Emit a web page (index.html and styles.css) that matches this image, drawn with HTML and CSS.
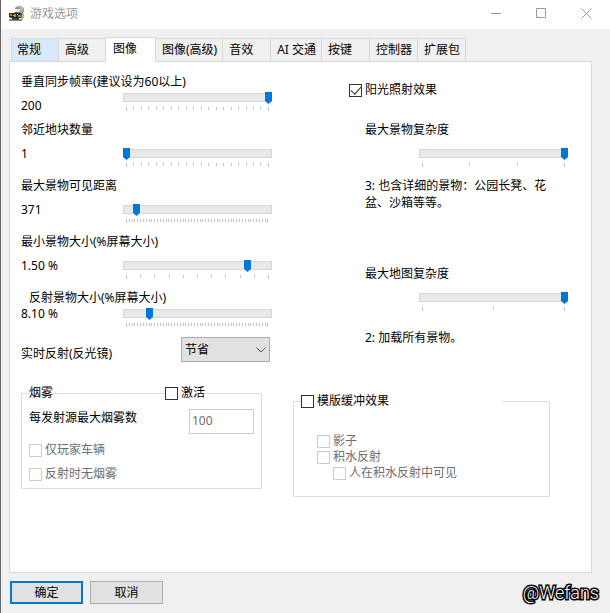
FILE: index.html
```
<!DOCTYPE html>
<html lang="zh-CN">
<head>
    <meta charset="UTF-8">
    <meta name="viewport" content="width=device-width, initial-scale=1.0">
    <title>游戏选项</title>
    <link rel="stylesheet" href="styles.css">
</head>
<body>

    <!-- Title bar -->
    <header class="titlebar">
        <svg class="app-icon" width="16" height="16" viewBox="0 0 16 16" aria-hidden="true">
            <path d="M6 2Q7 0 11 0Q15 1 15 4Q15 7 12 8L8 7L11 5Q12 3 10 3L6 3Z" fill="#8d8d8d"/>
            <path d="M8 1H12L14 3L13 6H11L12 3Z" fill="#b9b9b9"/>
            <path d="M0 7H5L7 6L14 8V12H2L0 11Z" fill="#2b2723"/>
            <path d="M1 8H3V10H1ZM5 8H7V11H5ZM9 9H12V11H9Z" fill="#b58a3a"/>
            <path d="M4 9H5V10H4ZM8 8H9V9H8Z" fill="#e4dcc8"/>
            <path d="M13 7H15V12L13 14H12Z" fill="#b3b3b3"/>
            <path d="M0 13H13V15H0Z" fill="#8a8a8a"/>
            <path d="M3 12H10V14H3Z" fill="#4a4036"/>
        </svg>
        <h1>游戏选项</h1>
        <div class="window-controls">
            <button type="button" aria-label="最小化">
                <svg width="11" height="11" viewBox="0 0 11 11"><path d="M0 5.500H10"/></svg>
            </button>
            <button type="button" aria-label="最大化">
                <svg width="11" height="11" viewBox="0 0 11 11"><path d="M.5 .5H9.500V9.500H.5Z"/></svg>
            </button>
            <button type="button" aria-label="关闭">
                <svg width="11" height="11" viewBox="0 0 11 11"><path d="M.5 .5L10.500 10.500M10.500 .5L.5 10.500"/></svg>
            </button>
        </div>
    </header>

    <main class="dialog">
        <div class="tabs" role="tablist">
            <button class="tab hot" role="tab">常规</button>
            <button class="tab" role="tab">高级</button>
            <button class="tab active" role="tab" aria-selected="true">图像</button>
            <button class="tab" role="tab">图像(高级)</button>
            <button class="tab" role="tab">音效</button>
            <button class="tab" role="tab">AI 交通</button>
            <button class="tab" role="tab">按键</button>
            <button class="tab" role="tab">控制器</button>
            <button class="tab" role="tab">扩展包</button>
        </div>

        <div class="panel" role="tabpanel">
            <!-- Left column -->
            <div class="column">
                <div class="setting raised">
                    <label for="fps">垂直同步帧率(建议设为60以上)</label>
                    <output for="fps">200</output>
                    <div class="slider">
                        <input type="range" id="fps" min="0" max="142" value="142">
                        <div class="ticks" data-count="20"></div>
                    </div>
                </div>
                <div class="setting">
                    <label for="tiles">邻近地块数量</label>
                    <output for="tiles">1</output>
                    <div class="slider">
                        <input type="range" id="tiles" min="0" max="142" value="0">
                        <div class="ticks" data-count="20"></div>
                    </div>
                </div>
                <div class="setting">
                    <label for="distance">最大景物可见距离</label>
                    <output for="distance">371</output>
                    <div class="slider">
                        <input type="range" id="distance" min="0" max="142" value="10">
                        <div class="ticks" data-count="51"></div>
                    </div>
                </div>
                <div class="setting">
                    <label for="minsize">最小景物大小(%屏幕大小)</label>
                    <output for="minsize">1.50 %</output>
                    <div class="slider">
                        <input type="range" id="minsize" min="0" max="142" value="121">
                        <div class="ticks" data-count="11"></div>
                    </div>
                </div>
                <div class="setting compact">
                    <label for="reflsize">反射景物大小(%屏幕大小)</label>
                    <output for="reflsize">8.10 %</output>
                    <div class="slider">
                        <input type="range" id="reflsize" min="0" max="142" value="23">
                        <div class="ticks" data-count="51"></div>
                    </div>
                </div>

                <div class="select-row">
                    <label for="reflections">实时反射(反光镜)</label>
                    <div class="select">
                        <select id="reflections">
                            <option>节省</option>
                        </select>
                        <svg width="10" height="6" viewBox="0 0 10 6" aria-hidden="true"><path d="M.5 .5L5 5L9.500 .5"/></svg>
                    </div>
                </div>

                <fieldset class="group smoke">
                    <legend>烟雾</legend>
                    <label class="check on-border"><input type="checkbox">激活</label>
                    <div class="number-row">
                        <label for="smokemax">每发射源最大烟雾数</label>
                        <input type="text" id="smokemax" value="100" disabled>
                    </div>
                    <label class="check disabled"><input type="checkbox" disabled>仅玩家车辆</label>
                    <label class="check disabled"><input type="checkbox" disabled>反射时无烟雾</label>
                </fieldset>
            </div>

            <!-- Right column -->
            <div class="column">
                <label class="check sun"><input type="checkbox" checked>阳光照射效果</label>

                <div class="complexity">
                    <label for="objects">最大景物复杂度</label>
                    <div class="slider">
                        <input type="range" id="objects" min="0" max="3" value="3">
                        <div class="ticks" data-count="4"></div>
                    </div>
                    <p>3: 也含详细的景物：公园长凳、花盆、沙箱等等。</p>
                </div>
                <div class="complexity">
                    <label for="map">最大地图复杂度</label>
                    <div class="slider">
                        <input type="range" id="map" min="0" max="2" value="2">
                        <div class="ticks" data-count="3"></div>
                    </div>
                    <p class="spaced">2: 加载所有景物。</p>
                </div>

                <fieldset class="group stencil">
                    <legend><label class="check"><input type="checkbox">模版缓冲效果</label></legend>
                    <label class="check disabled"><input type="checkbox" disabled>影子</label>
                    <label class="check disabled"><input type="checkbox" disabled>积水反射</label>
                    <label class="check disabled nested"><input type="checkbox" disabled>人在积水反射中可见</label>
                </fieldset>
            </div>
        </div>

        <footer class="actions">
            <button type="button" class="btn default">确定</button>
            <button type="button" class="btn">取消</button>
            <span class="signature">@Wefans</span>
        </footer>
    </main>

    <script>
        // Fill every tick row with its marks
        document.querySelectorAll('.ticks').forEach(function (row) {
            for (let i = 0; i < Number(row.dataset.count); i++) {
                row.appendChild(document.createElement('i'));
            }
        });
    </script>

</body>
</html>
```
FILE: styles.css
```
* {
    box-sizing: border-box;
}
body {
    margin: 0;
    min-height: 100vh;
    display: flex;
    flex-direction: column;
    border-left: 1px solid #666;
    background-color: #f0f0f0;
    color: #000;
    font-family: "Noto Sans", "Noto Sans CJK SC", sans-serif;
    font-size: 12px;
    line-height: 16px;
}
button,
input,
select {
    font: inherit;
    color: inherit;
}

/* Title bar */
.titlebar {
    display: flex;
    align-items: center;
    height: 29px;
    padding: 0 13px 2px 8px;
    background-color: #fff;
}
.app-icon {
    margin-right: 5px;
}
.titlebar h1 {
    margin: 0;
    font-size: 12px;
    font-weight: normal;
    color: #999;
}
.window-controls {
    display: flex;
    gap: 24px;
    margin-left: auto;
}
.window-controls button {
    display: flex;
    padding: 0 5px;
    border: none;
    background: none;
}
.window-controls svg {
    fill: none;
    stroke: #999;
}

/* Tabs */
.dialog {
    flex: 1;
    display: flex;
    flex-direction: column;
    padding: 8px 18px 9px 8px;
}
.tabs {
    display: flex;
    align-items: flex-end;
    padding-left: 2px;
}
.tab {
    height: 23px;
    min-width: 48px;
    margin-left: -1px;
    padding: 0 5px 0 6px;
    border: 1px solid #d9d9d9;
    border-bottom: none;
    background-color: #f0f0f0;
    text-align: left;
}
.tab:first-child {
    margin-left: 0;
}
.tab.hot {
    padding-left: 5px;
    background-color: #d8eaf9;
}
.tab.active {
    z-index: 1;
    height: 25px;
    min-width: 51px;
    margin-bottom: -1px;
    padding: 0 7px 2px;
    background-color: #fff;
}
.tab.active ~ .tab {
    min-width: 49px;
}
.panel {
    flex: 1;
    display: grid;
    grid-template-columns: 272px 1fr;
    padding: 12px 11px;
    border: 1px solid #d9d9d9;
    background-color: #fff;
}

/* Sliders */
.setting {
    display: grid;
    grid-template-columns: 102px 149px;
    row-gap: 8px;
    margin-bottom: 11px;
}
.setting label {
    grid-column: 1 / -1;
}
.setting .slider {
    margin-top: 2px;
}
.setting.raised {
    row-gap: 2px;
    margin-bottom: 8px;
}
.setting.raised output {
    padding-top: 6px;
}
.setting.raised .slider {
    margin-top: 0;
}
.setting.compact {
    row-gap: 0;
    margin-bottom: 10px;
}
.setting.compact label {
    padding-left: 8px;
}
.slider {
    width: 149px;
}
.slider input {
    display: block;
    width: 100%;
    height: 11px;
    margin: 0;
    appearance: none;
    background: none;
}
.slider input::-webkit-slider-runnable-track {
    height: 9px;
    background-color: #e7eaea;
    box-shadow: inset 0 0 0 1px #d6d6d6;
}
.slider input::-webkit-slider-thumb {
    appearance: none;
    width: 7px;
    height: 12px;
    margin-top: -1px;
    background-color: #0078d7;
    clip-path: polygon(0 0, 100% 0, 100% 75%, 50% 100%, 0 75%);
}
.ticks {
    display: flex;
    justify-content: space-between;
    margin: 4px 3px 0;
}
.ticks i {
    width: 1px;
    height: 3px;
    background-color: #c4c4c4;
}
.ticks i:first-child,
.ticks i:last-child {
    height: 4px;
}

/* Drop-down */
.select-row {
    display: flex;
    align-items: flex-end;
    width: 249px;
    margin-bottom: 23px;
}
.select {
    position: relative;
    width: 89px;
    margin-left: auto;
}
.select select {
    display: block;
    width: 100%;
    height: 25px;
    padding: 0 3px;
    appearance: none;
    border: 1px solid #adadad;
    border-radius: 0;
    background-color: #e1e1e1;
}
.select svg {
    position: absolute;
    top: 10px;
    right: 4px;
    fill: none;
    stroke: #555;
    pointer-events: none;
}

/* Check boxes */
.check {
    display: flex;
    align-items: center;
    gap: 3px;
}
.check input {
    flex: none;
    display: grid;
    place-content: center;
    width: 13px;
    height: 13px;
    margin: 0;
    appearance: none;
    border: 1px solid #333;
    background-color: #fff;
}
.check input:checked::before {
    content: "";
    width: 5px;
    height: 9px;
    margin-bottom: 3px;
    border: solid #333;
    border-width: 0 1px 1px 0;
    transform: rotate(42deg);
}
.check.disabled {
    color: #6d6d6d;
}
.check.disabled input {
    border-color: #ccc;
}

/* Group boxes */
.group {
    position: relative;
    min-width: 0;
    margin: 0;
    border: 1px solid #dcdcdc;
}
.group legend {
    padding: 0;
}
.smoke {
    width: 241px;
    padding: 8px 7px 6px;
}
.smoke > .disabled {
    margin-bottom: 8px;
}
.smoke > .disabled:last-child {
    margin-bottom: 0;
}
.on-border {
    position: absolute;
    top: -16px;
    right: 56px;
    background-color: #fff;
}
.number-row {
    display: flex;
    justify-content: space-between;
    margin-bottom: 8px;
}
.number-row label {
    padding-top: 1px;
}
.number-row input {
    width: 65px;
    height: 25px;
    padding: 0 2px 2px;
    border: 1px solid #ccc;
    background-color: #fff;
    color: #6d6d6d;
}
.stencil {
    width: 257px;
    margin-top: -17px;
    padding: 24px 23px 15px;
}
.stencil legend {
    width: 201px;
    margin-left: -16px;
}
.stencil .nested {
    margin-left: 16px;
}

/* Right column */
.sun {
    margin: 8px 0 24px 56px;
}
.complexity {
    height: 144px;
    padding-left: 72px;
}
.complexity .slider {
    margin: 10px 0 0 54px;
}
.complexity p {
    width: 192px;
    margin: 10px 0 0;
    line-height: 17px;
}
.complexity .spaced {
    margin-top: 18px;
}

/* Buttons */
.actions {
    display: flex;
    gap: 7px;
    padding: 8px 0 0 1px;
}
.btn {
    width: 73px;
    height: 23px;
    padding: 0;
    border: 1px solid #adadad;
    background-color: #e1e1e1;
}
.btn.default {
    border: 2px solid #0078d7;
}
.signature {
    margin: 0 -7px 0 auto;
    font-family: Roboto, sans-serif;
    font-size: 18px;
    font-weight: 300;
    line-height: 23px;
    color: #fff;
    -webkit-text-stroke: 3px #000;
    paint-order: stroke fill;
}
```
